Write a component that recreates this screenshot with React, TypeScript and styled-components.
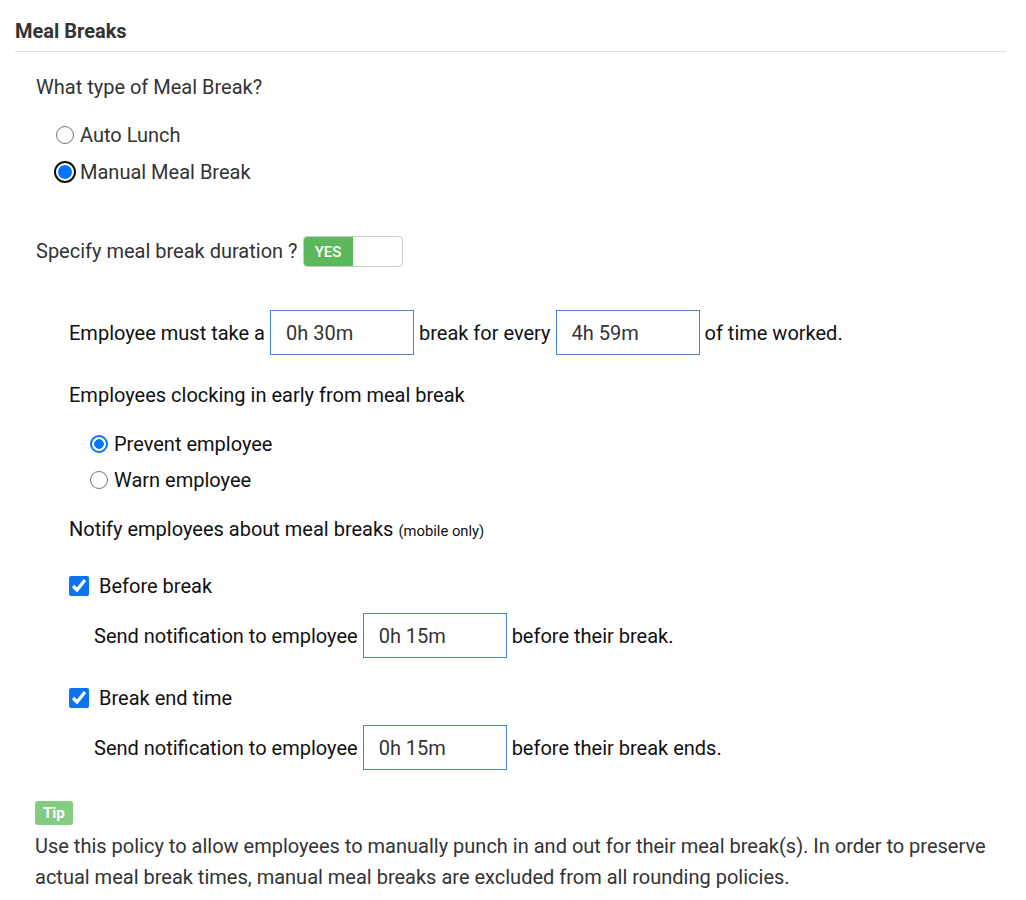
import styled, { createGlobalStyle } from "styled-components";

const GlobalStyle = createGlobalStyle`
  body {
    margin: 0;
    background: #fff;
    font-family: Roboto, "Liberation Sans", Arial, sans-serif;
  }
`;

const Page = styled.div`
  padding: 19px 20px 0 15px;
  width: 991px;
`;

const Header = styled.h2`
  margin: 0;
  padding: 0 0 8px;
  font-size: 20px;
  line-height: 24px;
  font-weight: 700;
  color: #333;
  border-bottom: 1px solid #ddd;
`;

const Section = styled.div`
  padding: 23px 0 0 21px;
  color: #333;
  font-size: 20px;
`;

const Question = styled.div`
  line-height: 24px;
  margin-bottom: 24px;
`;

const RadioList = styled.div<{ $indent: number; $gap: number }>`
  display: flex;
  flex-direction: column;
  gap: ${(p) => p.$gap}px;
  padding-left: ${(p) => p.$indent}px;
`;

const OptionLabel = styled.label`
  display: flex;
  align-items: center;
  gap: 6px;
  line-height: 24px;
`;

const Radio = styled.input.attrs({ type: "radio" })<{ $focused?: boolean }>`
  appearance: none;
  box-sizing: border-box;
  width: 18px;
  height: 18px;
  margin: 0;
  border-radius: 50%;
  border: 1px solid #767676;
  background: #fff;

  &:checked {
    border: 2px solid #0075ff;
    background: radial-gradient(circle, #0075ff 0 4.5px, #fff 5px);
  }

  ${(p) =>
    p.$focused &&
    `
    &:checked {
      border: 2px solid #fff;
      background: #0075ff;
      box-shadow: 0 0 0 2px #111;
    }
  `}
`;

const Check = styled.input.attrs({ type: "checkbox" })`
  width: 20px;
  height: 20px;
  margin: 0;
  accent-color: #0b74f0;
`;

const DurationRow = styled.div`
  display: flex;
  align-items: center;
  gap: 5px;
  margin-top: 52px;
  line-height: 24px;
`;

const DurationLabel = styled.span`
  margin-top: -2px;
`;

const Toggle = styled.div`
  display: flex;
  width: 98px;
  height: 29px;
  border: 1px solid #ccc;
  border-radius: 4px;
  overflow: hidden;
  background: #fff;
`;

const ToggleOn = styled.div`
  width: 49px;
  background: #5cb85c;
  color: #fff;
  font-size: 15px;
  font-weight: 500;
  display: flex;
  align-items: center;
  justify-content: center;
`;

const Inner = styled.div`
  padding: 43px 0 0 33px;
  color: #111;
`;

const InlineRow = styled.div<{ $indent?: number }>`
  display: flex;
  align-items: center;
  gap: 5px;
  padding-left: ${(p) => p.$indent || 0}px;
  line-height: 24px;
`;

const TimeInput = styled.input`
  box-sizing: border-box;
  width: 144px;
  height: 45px;
  border: 1px solid #4a86c5;
  padding: 0 15px;
  font-family: inherit;
  font-size: 20px;
  color: #333;
  background: #fff;
  outline: none;
`;

const SubHeading = styled.div<{ $top: number; $bottom: number }>`
  margin: ${(p) => p.$top}px 0 ${(p) => p.$bottom}px;
  line-height: 24px;
`;

const Small = styled.span`
  font-size: 14.8px;
`;

const CheckLabel = styled.label<{ $top: number }>`
  display: flex;
  align-items: center;
  gap: 10px;
  margin-top: ${(p) => p.$top}px;
  line-height: 24px;
`;

const NotifyRow = styled(InlineRow)`
  margin-top: 15px;
`;

const TipBlock = styled.div`
  padding: 31px 0 0 20px;
  color: #333;
  font-size: 20px;
`;

const TipBadge = styled.div`
  width: fit-content;
  background: #84cc84;
  color: #fff;
  font-size: 15px;
  font-weight: 700;
  line-height: 24px;
  padding: 0 8px;
  border-radius: 3px;
`;

const TipText = styled.p`
  margin: 6px 0 0;
  line-height: 31px;
`;

function App() {
  return (
    <Page>
      <GlobalStyle />
      <Header>Meal Breaks</Header>
      <Section>
        <Question>What type of Meal Break?</Question>
        <RadioList $indent={20} $gap={13}>
          <OptionLabel>
            <Radio name="type" />
            Auto Lunch
          </OptionLabel>
          <OptionLabel>
            <Radio name="type" defaultChecked $focused />
            Manual Meal Break
          </OptionLabel>
        </RadioList>

        <DurationRow>
          <DurationLabel>Specify meal break duration ?</DurationLabel>
          <Toggle>
            <ToggleOn>YES</ToggleOn>
          </Toggle>
        </DurationRow>

        <Inner>
          <InlineRow>
            Employee must take a
            <TimeInput defaultValue="0h 30m" />
            break for every
            <TimeInput defaultValue="4h 59m" />
            of time worked.
          </InlineRow>

          <SubHeading $top={28} $bottom={25}>
            Employees clocking in early from meal break
          </SubHeading>
          <RadioList $indent={21} $gap={12}>
            <OptionLabel>
              <Radio name="early" defaultChecked />
              Prevent employee
            </OptionLabel>
            <OptionLabel>
              <Radio name="early" />
              Warn employee
            </OptionLabel>
          </RadioList>

          <SubHeading $top={25} $bottom={0}>
            Notify employees about meal breaks <Small>(mobile only)</Small>
          </SubHeading>

          <CheckLabel $top={31}>
            <Check defaultChecked />
            Before break
          </CheckLabel>
          <NotifyRow $indent={25}>
            Send notification to employee
            <TimeInput defaultValue="0h 15m" />
            before their break.
          </NotifyRow>

          <CheckLabel $top={28}>
            <Check defaultChecked />
            Break end time
          </CheckLabel>
          <NotifyRow $indent={25}>
            Send notification to employee
            <TimeInput defaultValue="0h 15m" />
            before their break ends.
          </NotifyRow>
        </Inner>
      </Section>
      <TipBlock>
        <TipBadge>Tip</TipBadge>
        <TipText>
          Use this policy to allow employees to manually punch in and out for
          their meal break(s). In order to preserve actual meal break times,
          manual meal breaks are excluded from all rounding policies.
        </TipText>
      </TipBlock>
    </Page>
  );
}

export default App;
